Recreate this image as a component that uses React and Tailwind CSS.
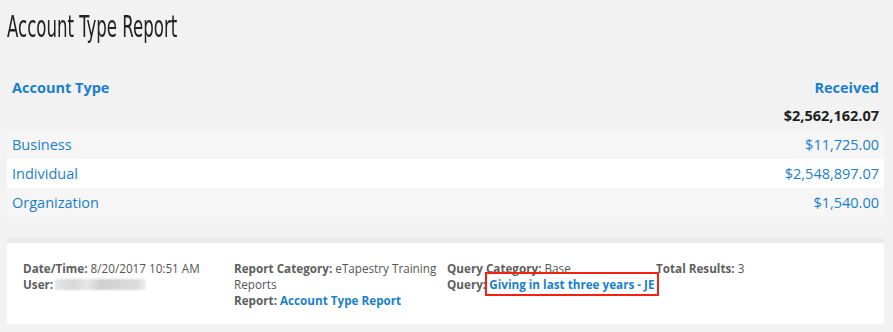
import React from "react";

const rows = [
  { name: "Business", amount: "$11,725.00", bg: "bg-[#f6f6f6]" },
  { name: "Individual", amount: "$2,548,897.07", bg: "bg-white" },
  { name: "Organization", amount: "$1,540.00", bg: "bg-[#f6f6f6]" },
];

function Label({ children }) {
  return <span className="font-bold text-[#5e5e5e]">{children}</span>;
}

export default function App() {
  return (
    <div
      className="w-[893px] h-[332px] overflow-hidden bg-[#f2f2f2] text-[#555]"
      style={{ fontFamily: '"Open Sans", "Liberation Sans", sans-serif' }}
    >
      {/* page heading */}
      <div className="h-[52px] flex items-center pl-[7px]">
        <h1
          className="text-[30px] leading-none text-[#222] origin-left scale-x-[0.615] whitespace-nowrap pt-[2px]"
          style={{ fontFamily: '"Liberation Sans Narrow", "DejaVu Sans Condensed", sans-serif' }}
        >
          Account Type Report
        </h1>
      </div>

      {/* report table */}
      <div className="mx-[7px] mt-[22px] w-[877px]">
        <div className="h-[28px] flex items-center justify-between px-[5px] text-[14.5px] font-bold text-[#1a7fcb]">
          <span>Account Type</span>
          <span>Received</span>
        </div>
        <div className="h-[28px] flex items-center justify-end px-[5px] text-[14.5px] font-bold text-[#1e1e1e]">
          $2,562,162.07
        </div>
        {rows.map((r) => (
          <div
            key={r.name}
            className={`h-[29px] flex items-center justify-between px-[5px] text-[14.5px] text-[#1a7fcb] ${r.bg}`}
          >
            <span>{r.name}</span>
            <span>{r.amount}</span>
          </div>
        ))}
      </div>

      {/* report details */}
      <div className="mx-[7px] mt-[21px] w-[877px] h-[86px] border-t-[5px] border-[#e8eaec] bg-white pl-[16px] pt-[17px] text-[11.7px] leading-[16px]">
        <div className="grid grid-cols-[211px_213px_209px_auto]">
          <div>
            <div>
              <Label>Date/Time:</Label> 8/20/2017 10:51 AM
            </div>
            <div className="flex items-center">
              <Label>User:</Label>
              <span className="ml-[2px] inline-block w-[91px] h-[11px] bg-[linear-gradient(90deg,#e4e4e4,#d8d8d8_20%,#e6e6e6_35%,#cfcfcf_50%,#d6d6d6_70%,#dcdcdc_90%,#eeeeee)] blur-[1px]" />
            </div>
          </div>
          <div className="w-[208px]">
            <div>
              <Label>Report Category:</Label> eTapestry Training Reports
            </div>
            <div>
              <Label>Report:</Label>{" "}
              <span className="font-bold text-[#1a7fcb]">Account Type Report</span>
            </div>
          </div>
          <div>
            <div>
              <Label>Query Category:</Label> Base
            </div>
            <div className="whitespace-nowrap">
              <Label>Query:</Label>{" "}
              <span className="font-bold text-[#1a7fcb] outline-2 outline-[#f2220f] outline-offset-[2px]">
                Giving in last three years - JE
              </span>
            </div>
          </div>
          <div>
            <Label>Total Results:</Label> 3
          </div>
        </div>
      </div>
    </div>
  );
}
